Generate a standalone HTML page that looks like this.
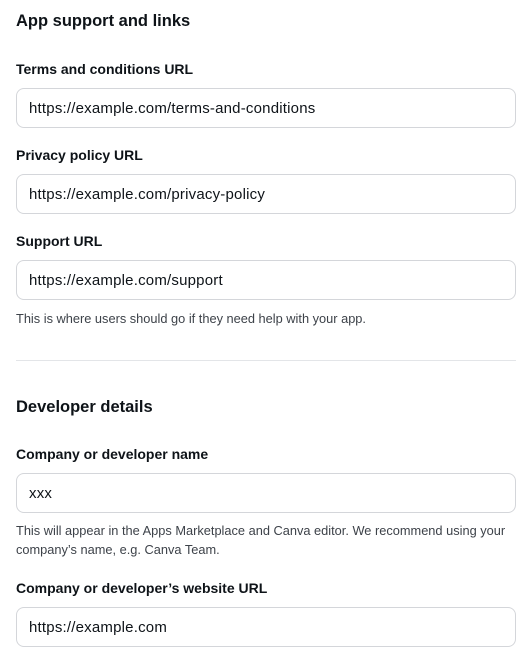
<!DOCTYPE html>
<html><head><meta charset="utf-8"><style>
*{margin:0;padding:0;box-sizing:border-box}
body{width:532px;height:660px;background:#fff;font-family:"Liberation Sans",sans-serif;color:#0e1318;position:relative;overflow:hidden}
.a{position:absolute;left:16px;white-space:nowrap}
h2{font-size:16.5px;font-weight:600;line-height:20px}
.l{font-size:14px;font-weight:700;line-height:18px}
.i{width:500px;height:40px;border:1px solid #d4d6da;border-radius:8px;font-size:15px;letter-spacing:0.2px;line-height:40px;padding-left:12px}
.h{font-size:12.8px;color:#3d4249;line-height:19px}
.d{position:absolute;left:16px;top:360px;width:500px;height:1px;background:#e3e5e8}
</style></head><body>
<h2 class="a" style="top:11px">App support and links</h2>
<div class="a l" style="top:60px">Terms and conditions URL</div>
<div class="a i" style="top:88px">https://example.com/terms-and-conditions</div>
<div class="a l" style="top:146px">Privacy policy URL</div>
<div class="a i" style="top:174px">https://example.com/privacy-policy</div>
<div class="a l" style="top:232px">Support URL</div>
<div class="a i" style="top:260px">https://example.com/support</div>
<div class="a h" style="top:309px">This is where users should go if they need help with your app.</div>
<div class="d"></div>
<h2 class="a" style="top:397px">Developer details</h2>
<div class="a l" style="top:445px">Company or developer name</div>
<div class="a i" style="top:473px">xxx</div>
<div class="a h" style="top:521px">This will appear in the Apps Marketplace and Canva editor. We recommend using your<br>company’s name, e.g. Canva Team.</div>
<div class="a l" style="top:579px">Company or developer’s website URL</div>
<div class="a i" style="top:607px">https://example.com</div>
</body></html>
